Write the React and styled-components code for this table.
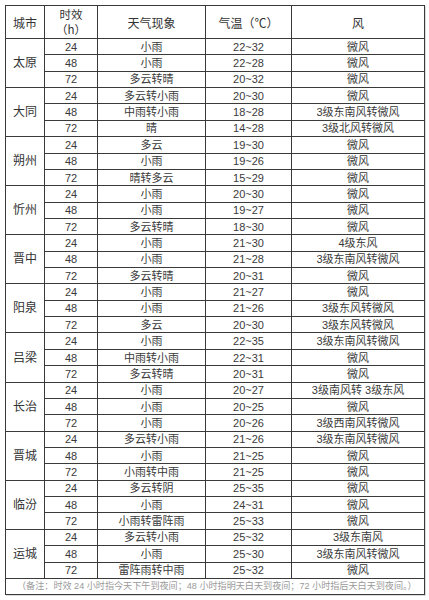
import React from "react";
import styled, { createGlobalStyle } from "styled-components";

const GlobalStyle = createGlobalStyle`
  html, body {
    margin: 0;
    padding: 0;
    background: #ffffff;
  }
  body {
    font-family: "Liberation Sans", "Noto Sans CJK SC", sans-serif;
    color: #333;
  }
`;

const forecast = [
  {
    city: "太原",
    rows: [
      ["24", "小雨", "22~32", "微风"],
      ["48", "小雨", "22~28", "微风"],
      ["72", "多云转晴", "20~32", "微风"],
    ],
  },
  {
    city: "大同",
    rows: [
      ["24", "多云转小雨", "20~30", "微风"],
      ["48", "中雨转小雨", "18~28", "3级东南风转微风"],
      ["72", "晴", "14~28", "3级北风转微风"],
    ],
  },
  {
    city: "朔州",
    rows: [
      ["24", "多云", "19~30", "微风"],
      ["48", "小雨", "19~26", "微风"],
      ["72", "晴转多云", "15~29", "微风"],
    ],
  },
  {
    city: "忻州",
    rows: [
      ["24", "小雨", "20~30", "微风"],
      ["48", "小雨", "19~27", "微风"],
      ["72", "多云转晴", "18~30", "微风"],
    ],
  },
  {
    city: "晋中",
    rows: [
      ["24", "小雨", "21~30", "4级东风"],
      ["48", "小雨", "21~28", "3级东南风转微风"],
      ["72", "多云转晴", "20~31", "微风"],
    ],
  },
  {
    city: "阳泉",
    rows: [
      ["24", "小雨", "21~27", "微风"],
      ["48", "小雨", "21~26", "3级东风转微风"],
      ["72", "多云", "20~30", "3级东风转微风"],
    ],
  },
  {
    city: "吕梁",
    rows: [
      ["24", "小雨", "22~35", "3级东南风转微风"],
      ["48", "中雨转小雨", "22~31", "微风"],
      ["72", "多云转晴", "20~31", "微风"],
    ],
  },
  {
    city: "长治",
    rows: [
      ["24", "小雨", "20~27", "3级南风转 3级东风"],
      ["48", "小雨", "20~25", "微风"],
      ["72", "小雨", "20~26", "3级西南风转微风"],
    ],
  },
  {
    city: "晋城",
    rows: [
      ["24", "多云转小雨", "21~26", "3级东南风转微风"],
      ["48", "小雨", "21~25", "微风"],
      ["72", "小雨转中雨", "21~25", "微风"],
    ],
  },
  {
    city: "临汾",
    rows: [
      ["24", "多云转阴", "25~35", "微风"],
      ["48", "小雨", "24~31", "微风"],
      ["72", "小雨转雷阵雨", "25~33", "微风"],
    ],
  },
  {
    city: "运城",
    rows: [
      ["24", "多云转小雨", "25~32", "3级东南风"],
      ["48", "小雨", "25~30", "3级东南风转微风"],
      ["72", "雷阵雨转中雨", "25~32", "微风"],
    ],
  },
];

const App = () => {
  return (
    <>
      <GlobalStyle />
      <Page>
        <Table>
          <colgroup>
            <col style={{ width: 39 }} />
            <col style={{ width: 53 }} />
            <col style={{ width: 108 }} />
            <col style={{ width: 86 }} />
            <col style={{ width: 133 }} />
          </colgroup>
          <thead>
            <HeadRow>
              <HeadCell>城市</HeadCell>
              <HeadCell>
                <HeadLine>时效</HeadLine>
                <HeadLine>（h）</HeadLine>
              </HeadCell>
              <HeadCell>天气现象</HeadCell>
              <HeadCell>气温（℃）</HeadCell>
              <HeadCell>风</HeadCell>
            </HeadRow>
          </thead>
          <tbody>
            {forecast.map((group) =>
              group.rows.map((row, i) => (
                <DataRow key={group.city + row[0]}>
                  {i === 0 && <CityCell rowSpan={3}>{group.city}</CityCell>}
                  <Cell>{row[0]}</Cell>
                  <Cell>{row[1]}</Cell>
                  <Cell>{row[2]}</Cell>
                  <Cell>{row[3]}</Cell>
                </DataRow>
              ))
            )}
            <NoteRow>
              <NoteCell colSpan={5}>
                （备注：时效 24 小时指今天下午到夜间；48 小时指明天白天到夜间；72 小时指后天白天到夜间。）
              </NoteCell>
            </NoteRow>
          </tbody>
        </Table>
      </Page>
    </>
  );
};

export default App;

const Page = styled.div`
  width: 429px;
  height: 600px;
  padding: 5px 0 0 5px;
  box-sizing: border-box;
  background: #fff;
`;

const Table = styled.table`
  width: 420px;
  table-layout: fixed;
  border-collapse: collapse;
  border: 1px solid #3a3a3a;
  box-shadow: 1px 1px 0 #ddd;
`;

const HeadRow = styled.tr`
  height: 33px;
`;

const HeadCell = styled.th`
  border: 1px solid #3a3a3a;
  padding: 0;
  font-weight: normal;
  font-size: 12px;
  line-height: 15px;
  color: #333;
  text-align: center;
  vertical-align: middle;
  font-family: "Noto Sans CJK SC", sans-serif;
`;

const HeadLine = styled.div`
  height: 15px;
  line-height: 15px;
  font-size: 11.5px;
`;

const DataRow = styled.tr`
  height: 16.36px;
`;

const Cell = styled.td`
  border: 1px solid #3a3a3a;
  padding: 0;
  font-size: 11px;
  line-height: 14px;
  color: #3a3a3a;
  text-align: center;
  vertical-align: middle;
  white-space: nowrap;
  overflow: hidden;
`;

const CityCell = styled(Cell)`
  font-size: 12px;
  color: #333;
`;

const NoteRow = styled.tr`
  height: 16px;
`;

const NoteCell = styled.td`
  border: 1px solid #3a3a3a;
  padding: 0 0 0 11px;
  font-size: 9.1px;
  line-height: 12px;
  color: #9a9a9a;
  text-align: left;
  white-space: nowrap;
  overflow: hidden;
`;
